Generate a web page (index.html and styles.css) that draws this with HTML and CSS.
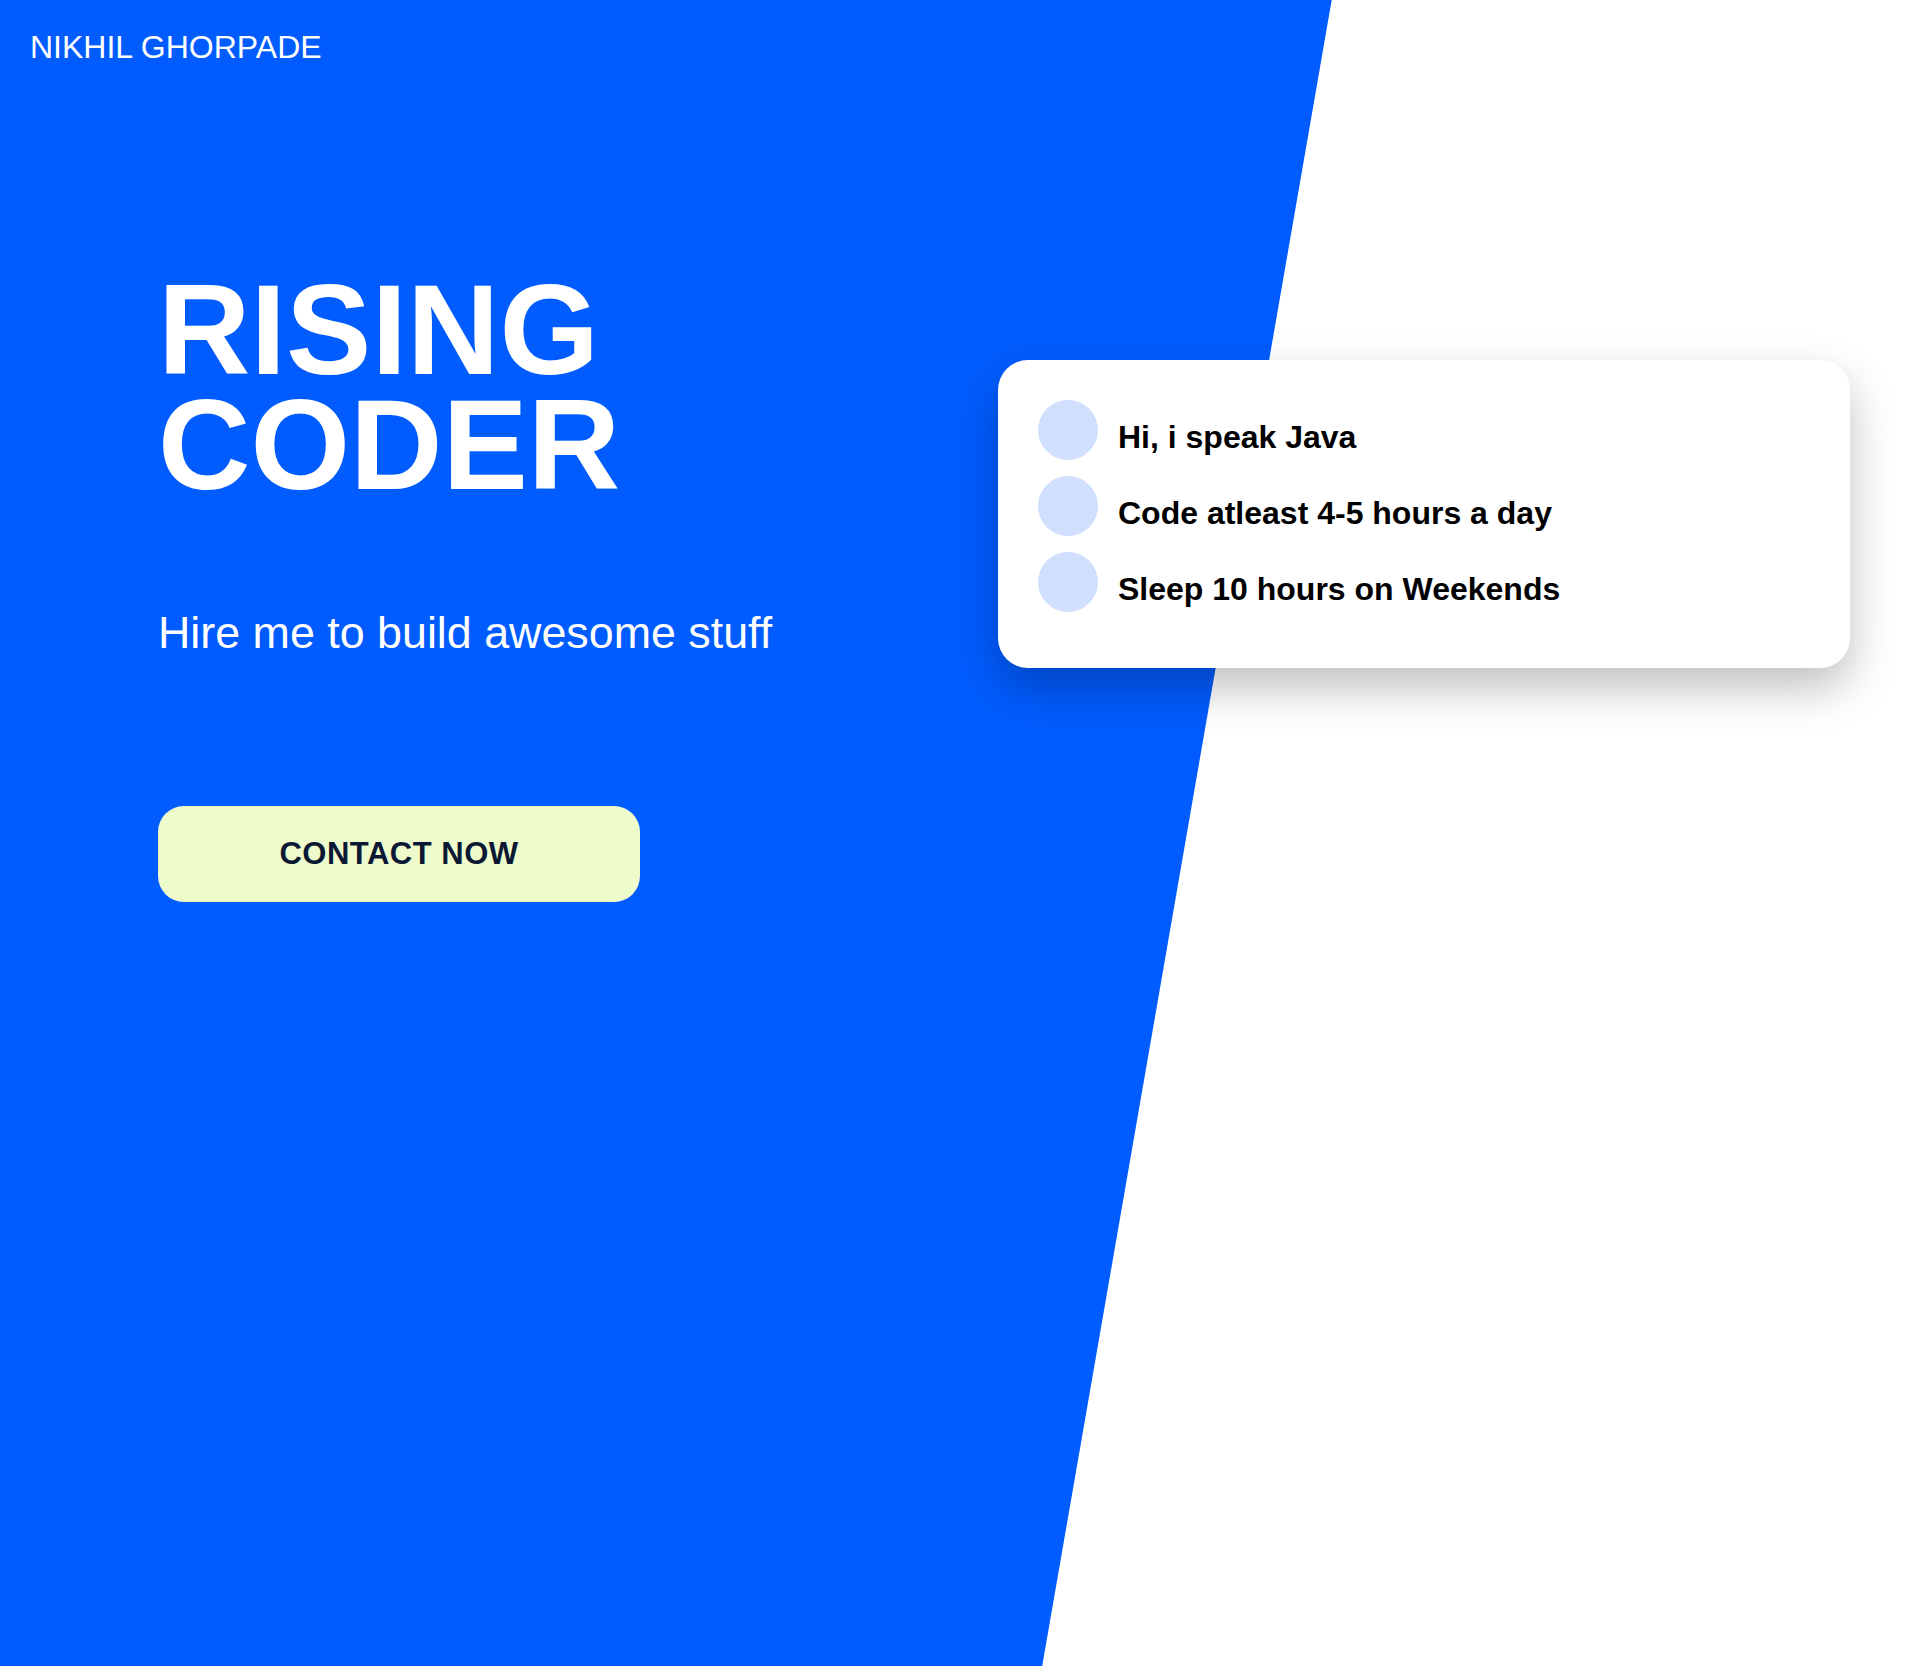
FILE: index.html
```html
<!DOCTYPE html>
<html lang="en">
<head>
<meta charset="utf-8">
<title>Nikhil Ghorpade</title>
<link rel="stylesheet" href="styles.css">
</head>
<body>
<div class="page">
  <header class="header">
    <div class="brand">NIKHIL GHORPADE</div>
  </header>
  <main class="main">
    <section class="hero">
      <h1 class="title">RISING<br>CODER</h1>
      <p class="subtitle">Hire me to build awesome stuff</p>
      <button class="cta">CONTACT NOW</button>
    </section>
    <aside class="card">
      <ul class="facts">
        <li class="fact"><span class="dot"></span><span class="fact-text">Hi, i speak Java</span></li>
        <li class="fact"><span class="dot"></span><span class="fact-text">Code atleast 4-5 hours a day</span></li>
        <li class="fact"><span class="dot"></span><span class="fact-text">Sleep 10 hours on Weekends</span></li>
      </ul>
    </aside>
  </main>
</div>
</body>
</html>
```

FILE: styles.css
```css
* { box-sizing: border-box; }

html, body {
  margin: 0;
  padding: 0;
}

body {
  font-family: "Liberation Sans", Arial, sans-serif;
  background: #ffffff;
  color: #000;
}

.page {
  position: relative;
  min-height: 1666px;
  overflow: hidden;
}

.page::before {
  content: "";
  position: absolute;
  inset: 0;
  background: #005cff;
  clip-path: polygon(0 0, 69% 0, 54% 100%, 0 100%);
  z-index: 0;
}

.header {
  position: relative;
  z-index: 1;
  padding: 29px 30px 0;
}

.brand {
  color: #fff;
  font-size: 32px;
  line-height: 37px;
}

.main {
  position: relative;
  z-index: 1;
  display: flex;
  justify-content: space-between;
  align-items: flex-start;
  padding: 0 80px 0 158px;
}

.hero {
  margin-top: 206px;
  display: flex;
  flex-direction: column;
  align-items: flex-start;
}

.title {
  margin: 0;
  color: #fff;
  font-size: 128px;
  font-weight: 700;
  line-height: 115px;
}

.subtitle {
  margin: 104px 0 0;
  color: #fff;
  font-size: 44.8px;
  line-height: 52px;
}

.cta {
  margin-top: 148px;
  width: 482px;
  height: 96px;
  border: none;
  border-radius: 26px;
  background: #eefccc;
  color: #0b1833;
  font-family: "Liberation Sans", Arial, sans-serif;
  font-size: 31px;
  font-weight: 700;
  letter-spacing: 0.5px;
  cursor: pointer;
}

.card {
  margin-top: 294px;
  width: 852px;
  background: #fff;
  border-radius: 30px;
  padding: 40px;
  box-shadow: 0 20px 45px rgba(0, 0, 0, 0.25);
}

.facts {
  list-style: none;
  margin: 0;
  padding: 0;
}

.fact {
  display: flex;
  align-items: center;
  gap: 20px;
  margin-bottom: 16px;
}

.dot {
  flex: none;
  width: 60px;
  height: 60px;
  border-radius: 50%;
  background: #cfdffd;
}

.fact-text {
  margin-top: 14px;
  font-size: 32px;
  font-weight: 700;
  line-height: 36px;
  color: #000;
}
```
